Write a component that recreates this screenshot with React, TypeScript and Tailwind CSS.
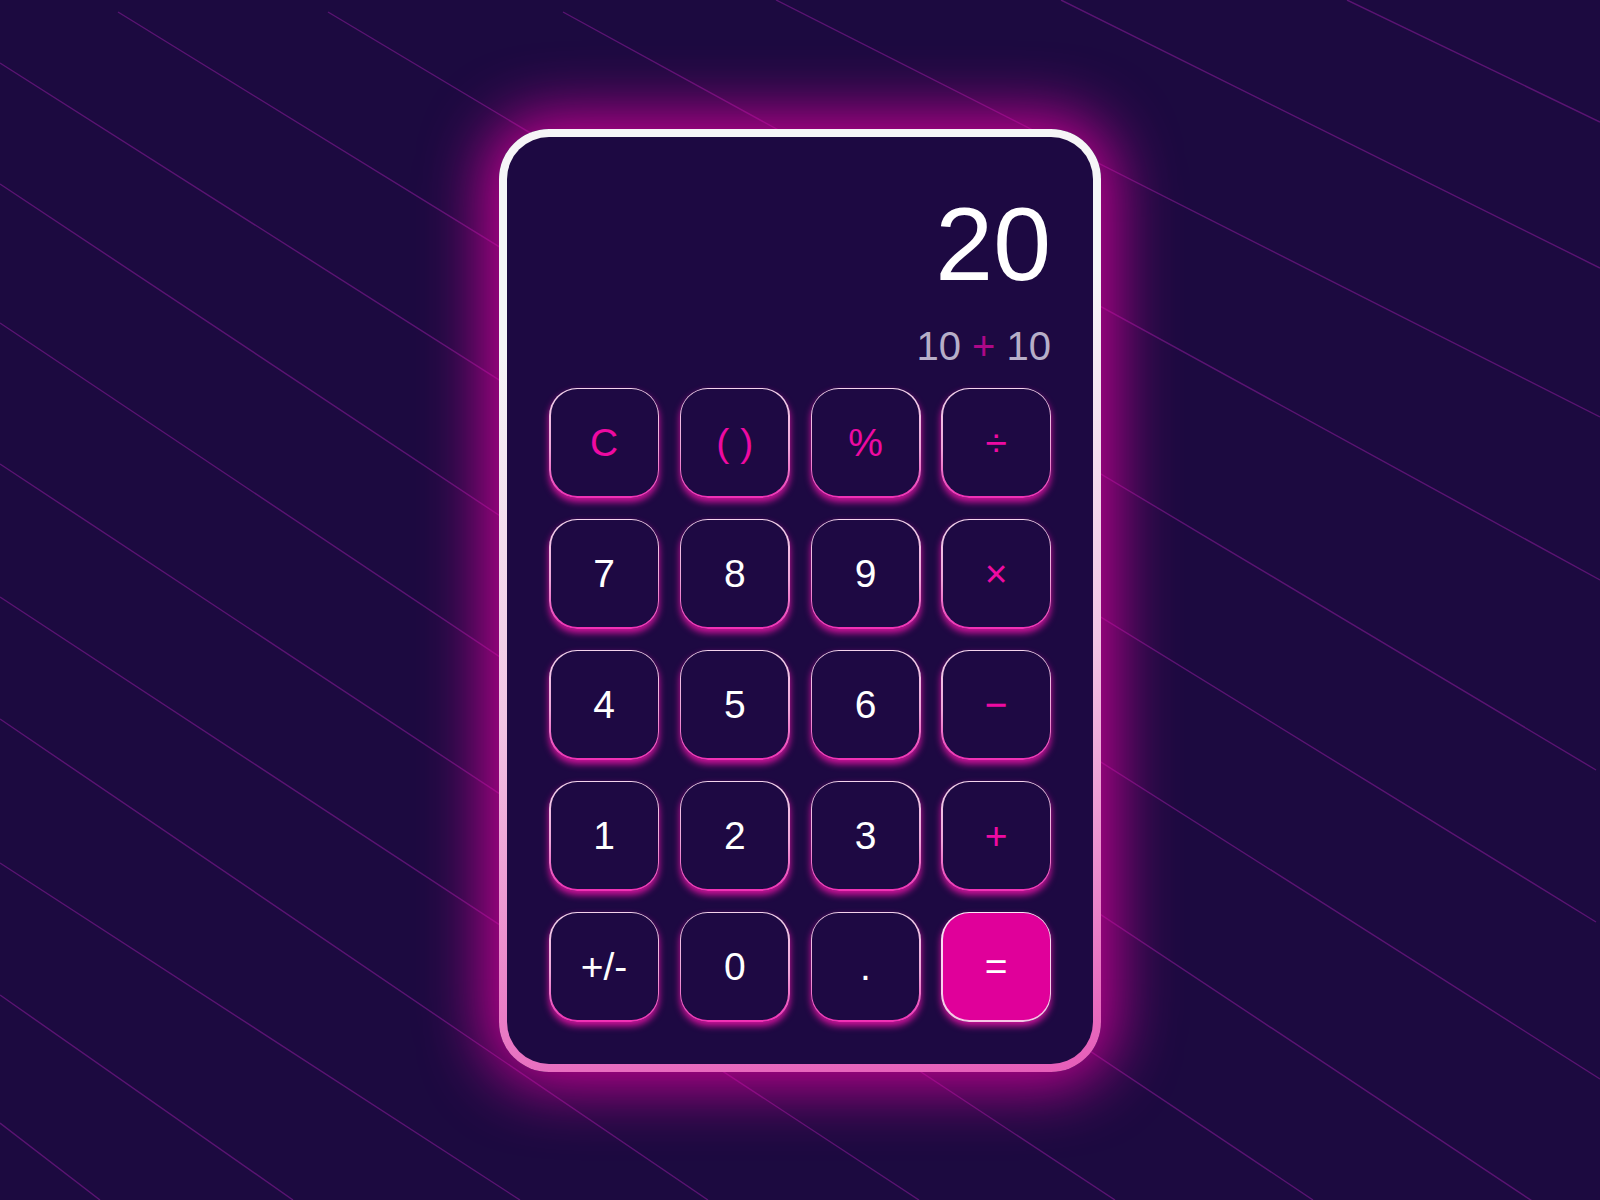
import React from 'react';

type Key = {
  label: string;
  kind: 'num' | 'op' | 'eq';
};

const keys: Key[] = [
  { label: 'C', kind: 'op' },
  { label: '( )', kind: 'op' },
  { label: '%', kind: 'op' },
  { label: '÷', kind: 'op' },
  { label: '7', kind: 'num' },
  { label: '8', kind: 'num' },
  { label: '9', kind: 'num' },
  { label: '×', kind: 'op' },
  { label: '4', kind: 'num' },
  { label: '5', kind: 'num' },
  { label: '6', kind: 'num' },
  { label: '−', kind: 'op' },
  { label: '1', kind: 'num' },
  { label: '2', kind: 'num' },
  { label: '3', kind: 'num' },
  { label: '+', kind: 'op' },
  { label: '+/-', kind: 'num' },
  { label: '0', kind: 'num' },
  { label: '.', kind: 'num' },
  { label: '=', kind: 'eq' },
];

// background stripes, page coordinates
const stripes: [number, number, number, number][] = [
  [118, 12, 1596, 922],
  [328, 12, 1596, 770],
  [563, 12, 1600, 580],
  [776, 0, 1600, 417],
  [1061, 0, 1600, 268],
  [1347, 0, 1600, 122],
  [0, 63, 1600, 1079],
  [0, 184, 1600, 1246],
  [0, 323, 1313, 1200],
  [0, 464, 1115, 1200],
  [0, 597, 919, 1200],
  [0, 719, 708, 1200],
  [0, 863, 520, 1200],
  [0, 995, 293, 1200],
  [0, 1123, 100, 1200],
];

const Stripes = () => (
  <svg className="absolute inset-0 h-full w-full" viewBox="0 0 1600 1200" preserveAspectRatio="none">
    {stripes.map(([x1, y1, x2, y2], i) => (
      <line key={i} x1={x1} y1={y1} x2={x2} y2={y2} stroke="#5a1472" strokeWidth="1.4" />
    ))}
  </svg>
);

const CalcKey = ({ k }: { k: Key }) => {
  const face =
    k.kind === 'eq'
      ? 'bg-[#e0009a] text-white'
      : k.kind === 'op'
        ? 'bg-[#1e0943] text-[#ee0aa2]'
        : 'bg-[#1e0943] text-white';
  const ring =
    k.kind === 'eq'
      ? 'bg-[linear-gradient(180deg,#fbe6f5_0%,#f7d2ec_60%,#f7c4e6_100%)]'
      : 'bg-[linear-gradient(180deg,#f3d4ec_0%,#eea6d8_55%,#f02fb4_100%)]';
  return (
    <div className={`h-[110px] w-[110px] rounded-[28px] p-[1.5px] shadow-[0_4px_7px_rgba(240,20,170,0.85)] ${ring}`}>
      <button
        className={`flex h-full w-full items-center justify-center rounded-[26.5px] text-[39px] leading-none ${face}`}
      >
        {k.label}
      </button>
    </div>
  );
};

export default function App() {
  return (
    <div
      className="relative flex h-[1200px] w-full items-center justify-center overflow-hidden bg-[#1c0a40]"
      style={{ fontFamily: '"Liberation Sans", Arial, sans-serif' }}
    >
      <Stripes />
      <div className="relative z-10 rounded-[50px] bg-[linear-gradient(172deg,#f6f5f7_22%,#f2c4e4_58%,#e65cb8_100%)] p-[8px] shadow-[0_0_64px_12px_rgba(225,0,160,0.9)]">
        <div className="flex h-[927px] w-[586px] flex-col rounded-[42px] bg-[#1d0942] px-[42px] pb-[42px] pt-[55px]">
          <div className="text-right text-[104px] leading-none text-white">20</div>
          <div className="mt-[30px] text-right text-[40px] leading-none text-[#b7aec8]">
            10 <span className="text-[#ad0888]">+</span> 10
          </div>
          <div className="mt-[22px] grid grid-cols-4 gap-[21px]">
            {keys.map((k) => (
              <CalcKey key={k.label} k={k} />
            ))}
          </div>
        </div>
      </div>
    </div>
  );
}
